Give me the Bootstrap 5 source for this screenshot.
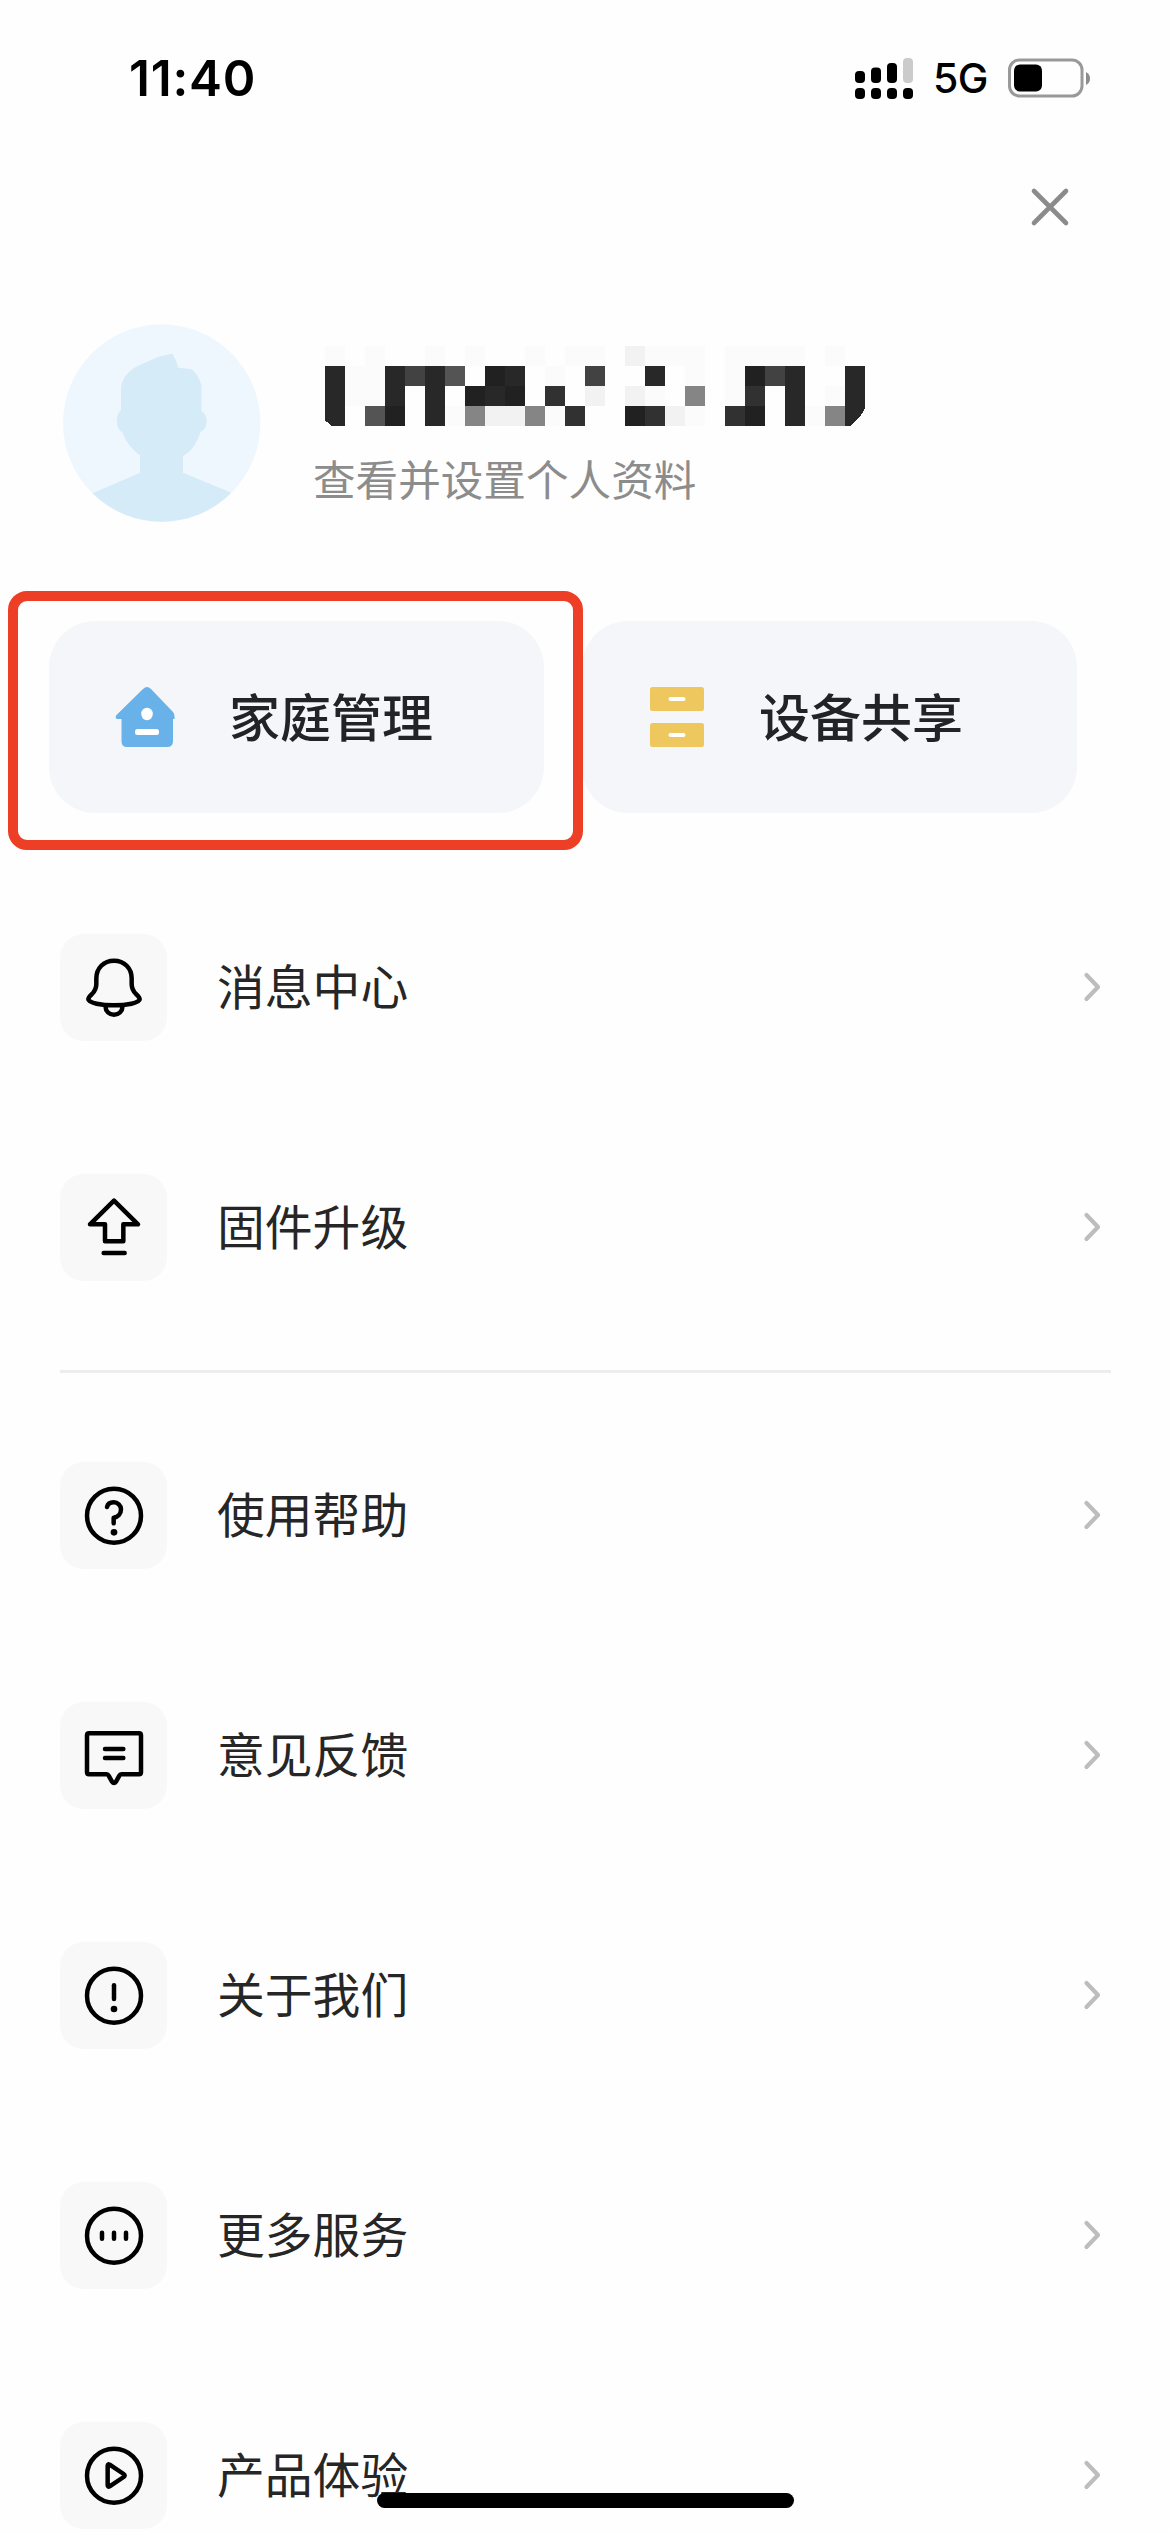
<!DOCTYPE html>
<html lang="zh-CN">
<head>
<meta charset="utf-8">
<meta name="viewport" content="width=device-width, initial-scale=1">
<title>个人中心</title>
<link href="https://cdn.jsdelivr.net/npm/bootstrap@5.3.0/dist/css/bootstrap.min.css" rel="stylesheet">
<style>
body{background:#fefefe;color:#222326;font-family:"Noto Sans CJK SC",sans-serif;margin:0}
.screen{width:1170px;height:2532px}
.statusbar{height:156px;padding:0 79px 0 129px;font-family:Inter,sans-serif;color:#000}
.clock{font-size:49.5px;font-weight:600;line-height:156px;letter-spacing:.8px}
.net{font-size:41px;font-weight:500;line-height:157px;margin-left:19px;width:75px;letter-spacing:-.5px}
.topbar{height:168px;padding:30px 99px 0 0}
.profile{height:198px;padding-left:63px}
.profile-info{padding:22px 0 0 52px}
.nick{display:block;margin-left:12px}
.hint{font-size:42.6px;line-height:60px;color:#8c8c8c;margin-top:22px;font-weight:400}
.shortcuts{margin-top:101px;padding:0 93px 0 49px;gap:38px}
.profile + .shortcuts{margin-top:99px}
.tile{flex:1 1 0;height:192px;border-radius:46px;background:#f5f6fa;color:#222326;font-size:51px;font-weight:500;line-height:60px}
.tile:hover{color:#222326}
.tile svg{flex:none;margin:0 54px 0 66px}
.tile + .tile svg{margin:0 55px 0 68px}
.tile span,.entry .me-auto{padding-bottom:5px}
.frame{left:8px;top:591px;width:575px;height:259px;border:10px solid #ec3f26;border-radius:19px}
.menu-first{margin-top:54px}
.entry{height:240px;padding:0 69px 0 60px;color:#262626;font-size:47.8px;line-height:60px}
.glyph{width:107px;height:107px;border-radius:24px;background:#f8f8f8;margin-right:50px}
.glyph svg{display:block;fill:none;stroke:#000;stroke-width:13.5;stroke-linecap:round;stroke-linejoin:round}
.rule{height:3px;background:#ededed;margin:23px 59px 22px 60px}
.homebar{left:377px;top:2493px;width:417px;height:15px;background:#000}
</style>
<script src="https://cdn.jsdelivr.net/npm/bootstrap@5.3.0/dist/js/bootstrap.bundle.min.js"></script>
</head>
<body>
<div class="screen position-relative overflow-hidden">
  <div class="statusbar d-flex align-items-center">
    <div class="clock me-auto">11:40</div>
    <svg width="60" height="44" viewBox="0 0 60 44">
      <rect x="1" y="15" width="10" height="12" rx="4"/><rect x="17" y="11.500" width="10" height="15.500" rx="4"/><rect x="33" y="7" width="10" height="20" rx="4"/><rect x="49" y="2" width="10" height="25" rx="4" fill="#cbcbcb"/>
      <rect x="1" y="32" width="10" height="11" rx="4"/><rect x="17" y="32" width="10" height="11" rx="4"/><rect x="33" y="32" width="10" height="11" rx="4"/><rect x="49" y="32" width="10" height="11" rx="4"/>
    </svg>
    <div class="net">5G</div>
    <svg width="83" height="40" viewBox="0 0 83 40">
      <rect x="1.500" y="2" width="72.500" height="36" rx="10" fill="none" stroke="#999" stroke-width="3"/>
      <rect x="6" y="6.500" width="28" height="27" rx="6"/>
      <path d="M78 14Q82 16 82 20.500T78 27Z" fill="#8c8c8c"/>
    </svg>
  </div>
  <div class="topbar d-flex justify-content-end align-items-start">
    <svg width="42" height="42" viewBox="0 0 42 42" role="button" aria-label="关闭"><path d="M5 5L37 37M37 5L5 37" stroke="#8b8b8b" stroke-width="4.600" stroke-linecap="round"/></svg>
  </div>
  <div class="profile d-flex">
    <svg width="198" height="198" viewBox="0 0 594 594">
      <defs><clipPath id="disc"><circle cx="296" cy="297" r="296"/></clipPath></defs>
      <circle cx="296" cy="297" r="296" fill="#eff7fe"/>
      <path clip-path="url(#disc)" fill="#d6ebf8" d="M174 258V192C176 164 196 138 226 125L284 99Q310 92 328 89Q340 106 346 131L374 134Q388 134 394 143Q410 162 415 182V260Q431 270 431 292Q430 318 412 324C403 356 386 382 360 396V446L500 504L594 594H0L92 506L231 446V394C206 376 186 350 178 324Q162 318 161 290Q163 266 174 258Z"/>
    </svg>
    <div class="profile-info">
      <svg class="nick" width="540" height="80" viewBox="0 0 27 4" shape-rendering="crispEdges">
        <path fill="#fbfbfb" d="M0 0h1v1H0zM2 0h1v3H2zM5 0h1v1H5zM7 0h1v1H7zM10 0h1v1h-1zM12 0h2v1h-2zM16 0h3v1h-3zM20 0h3v1h-3zM23 0h1v1h-1zM25 0h1v1h-1zM1 1h1v2H1zM11 1h1v1h-1zM18 1h1v1h-1zM20 1h1v2h-1zM25 2h1v1h-1zM16 2h1v1h-1zM6 3h1v1H6zM11 3h1v1h-1zM18 3h1v1h-1zM24 3h1v1h-1z"/>
        <path fill="#f2f2f2" d="M15 0h1v1h-1zM13 2h1v1h-1zM15 2h1v1h-1zM8 3h2v1H8zM17 3h1v1h-1z"/>
        <path fill="#282828" d="M0 1h1v3H.3L.2 3.850 0 3.750zM3 1h1v3H3zM5 1h1v3H5zM8 1h2v2H7V2h1zM16 1h1v1h-1zM23 1h1v3h-1zM26 1h1v2.100Q26.800 3.600 26.250 4H26z"/>
        <path fill="#212121" d="M3 3h1v1H3zM8 1h1v1H8zM7 2h1v1H7zM9 2h1v1H9zM15 3h1v1h-1zM21 1h1v1h-1zM21 3h1v1h-1z"/>
        <path fill="#313131" d="M11 2h1v1h-1zM12 3h1v1h-1zM16 3h1v1h-1zM20 3h1v1h-1zM21 2h1v1h-1z"/>
        <path fill="#424242" d="M4 1h1v1H4zM13 1h1v1h-1zM22 1h1v1h-1z"/>
        <path fill="#545454" d="M6 1h1v1H6zM2 3h1v1H2z"/>
        <path fill="#858585" d="M7 3h1v1H7zM10 3h1v1h-1zM18 2h1v1h-1zM25 3h1v1h-1z"/>
      </svg>
      <div class="hint">查看并设置个人资料</div>
    </div>
  </div>
  <div class="shortcuts d-flex">
    <a class="tile d-flex align-items-center text-decoration-none" href="#">
      <svg width="60" height="62" viewBox="0 0 60 62"><path fill="#68b2e9" d="M28 3Q32 -1 36 3L58 26Q60 28 59.500 33L58 33V55Q58 61 52 61H12Q6.500 61 6.500 55V33H2Q-.5 32 1.500 29Z"/><ellipse cx="32" cy="28" rx="5.800" ry="6.200" fill="#fff"/><rect x="20" y="43" width="24" height="6" rx="2.500" fill="#fff"/></svg>
      <span>家庭管理</span>
    </a>
    <a class="tile d-flex align-items-center text-decoration-none" href="#">
      <svg width="54" height="62" viewBox="0 0 54 62"><g fill="#eec85e"><rect y="1" width="54" height="24" rx="2.500"/><rect y="37" width="54" height="24" rx="2.500"/></g><g fill="#fff"><rect x="18.500" y="11" width="17" height="4" rx="2"/><rect x="18.500" y="47" width="17" height="4" rx="2"/></g></svg>
      <span>设备共享</span>
    </a>
  </div>

  <div class="menu-first">
    <div class="entry d-flex align-items-center">
      <span class="glyph"><svg viewBox="0 0 321 321"><path d="M162 80C131 80 109 103 109 133V150C109 165 104 172 96 180C88 187 85 191 85 196C85 207 125 214 162 214S239 207 239 196C239 191 236 187 228 180C220 172 215 165 215 150V133C215 103 193 80 162 80ZM136 216C137 232 148 242 162 242S187 232 188 216"/></svg></span>
      <span class="me-auto">消息中心</span>
      <svg width="18" height="32" viewBox="0 0 18 32"><path d="M3.500 4L15 16 3.500 28" fill="none" stroke="#bdbdbd" stroke-width="4.200" stroke-linecap="round" stroke-linejoin="round"/></svg>
    </div>
    <div class="entry d-flex align-items-center">
      <span class="glyph"><svg viewBox="0 0 321 321"><path d="M162 80L234 151H190V202H135V151H90ZM131 237H194"/></svg></span>
      <span class="me-auto">固件升级</span>
      <svg width="18" height="32" viewBox="0 0 18 32"><path d="M3.500 4L15 16 3.500 28" fill="none" stroke="#bdbdbd" stroke-width="4.200" stroke-linecap="round" stroke-linejoin="round"/></svg>
    </div>
  </div>
  <div class="rule"></div>
  <div>
    <div class="entry d-flex align-items-center">
      <span class="glyph"><svg viewBox="0 0 321 321"><circle cx="162" cy="161" r="81"/><path d="M141 135C143 127 151 121 161 121C173 121 183 130 183 142C183 156 174 165 161 167V184"/><circle cx="162" cy="211" r="10" fill="#000" stroke="none"/></svg></span>
      <span class="me-auto">使用帮助</span>
      <svg width="18" height="32" viewBox="0 0 18 32"><path d="M3.500 4L15 16 3.500 28" fill="none" stroke="#bdbdbd" stroke-width="4.200" stroke-linecap="round" stroke-linejoin="round"/></svg>
    </div>
    <div class="entry d-flex align-items-center">
      <span class="glyph"><svg viewBox="0 0 321 321"><path d="M87 94H237Q243 94 243 100V211Q243 217 237 217H184Q180 217 178 221L168 239Q162 247 156 239L146 221Q144 217 140 217H87Q81 217 81 211V100Q81 94 87 94ZM135 141H190M135 168H190"/></svg></span>
      <span class="me-auto">意见反馈</span>
      <svg width="18" height="32" viewBox="0 0 18 32"><path d="M3.500 4L15 16 3.500 28" fill="none" stroke="#bdbdbd" stroke-width="4.200" stroke-linecap="round" stroke-linejoin="round"/></svg>
    </div>
    <div class="entry d-flex align-items-center">
      <span class="glyph"><svg viewBox="0 0 321 321"><circle cx="162" cy="161" r="81"/><path d="M162 130V171"/><circle cx="162" cy="201" r="10" fill="#000" stroke="none"/></svg></span>
      <span class="me-auto">关于我们</span>
      <svg width="18" height="32" viewBox="0 0 18 32"><path d="M3.500 4L15 16 3.500 28" fill="none" stroke="#bdbdbd" stroke-width="4.200" stroke-linecap="round" stroke-linejoin="round"/></svg>
    </div>
    <div class="entry d-flex align-items-center">
      <span class="glyph"><svg viewBox="0 0 321 321"><circle cx="162" cy="161" r="81"/><path d="M126 152V170M162 152V170M198 152V170"/></svg></span>
      <span class="me-auto">更多服务</span>
      <svg width="18" height="32" viewBox="0 0 18 32"><path d="M3.500 4L15 16 3.500 28" fill="none" stroke="#bdbdbd" stroke-width="4.200" stroke-linecap="round" stroke-linejoin="round"/></svg>
    </div>
    <div class="entry d-flex align-items-center">
      <span class="glyph"><svg viewBox="0 0 321 321"><circle cx="162" cy="161" r="81"/><path d="M143 131Q143 125 149 128L191 156Q197 160 191 165L149 193Q143 196 143 190Z"/></svg></span>
      <span class="me-auto">产品体验</span>
      <svg width="18" height="32" viewBox="0 0 18 32"><path d="M3.500 4L15 16 3.500 28" fill="none" stroke="#bdbdbd" stroke-width="4.200" stroke-linecap="round" stroke-linejoin="round"/></svg>
    </div>
  </div>
  <div class="frame position-absolute"></div>
  <div class="homebar position-absolute rounded-pill"></div>
</div>
</body>
</html>
